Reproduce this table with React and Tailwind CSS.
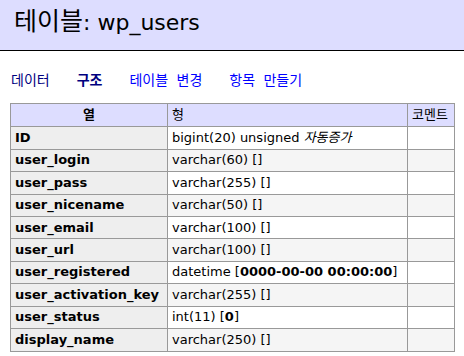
import React from "react";

const FONT = { fontFamily: '"DejaVu Sans", Verdana, "Noto Sans CJK KR", sans-serif' };

const COLUMNS = [
  { name: "ID", type: "bigint(20) unsigned", extra: "자동증가" },
  { name: "user_login", type: "varchar(60)", def: "" },
  { name: "user_pass", type: "varchar(255)", def: "" },
  { name: "user_nicename", type: "varchar(50)", def: "" },
  { name: "user_email", type: "varchar(100)", def: "" },
  { name: "user_url", type: "varchar(100)", def: "" },
  { name: "user_registered", type: "datetime", def: "0000-00-00 00:00:00" },
  { name: "user_activation_key", type: "varchar(255)", def: "" },
  { name: "user_status", type: "int(11)", def: "0" },
  { name: "display_name", type: "varchar(250)", def: "" },
];

export default function App() {
  return (
    <div className="w-[464px] h-[356px] bg-white text-black text-[13px] leading-[1.25] overflow-hidden" style={FONT}>
      {/* page heading */}
      <h2 className="h-[51px] bg-[#ddddff] border-b border-black pl-[14px] pt-[8px] text-[22px] leading-[27px] font-normal">
        <span className="text-[25px]">테이블</span>: wp_users
      </h2>

      {/* tabs */}
      <p className="flex gap-[27px] pl-[11px] mt-[21px] leading-[16px] text-[14px] [word-spacing:4px]">
        <a href="#" className="text-[#000080]">데이터</a>
        <a href="#" className="text-[#000080] font-bold">구조</a>
        <a href="#" className="text-[#0000ff]">테이블 변경</a>
        <a href="#" className="text-[#0000ff]">항목 만들기</a>
      </p>

      {/* structure table */}
      <table className="ml-[10px] mt-[15px] border-collapse table-fixed w-[444px]">
        <colgroup>
          <col className="w-[157px]" />
          <col className="w-[240px]" />
          <col className="w-[47px]" />
        </colgroup>
        <thead className="bg-[#ddddff]">
          <tr>
            <th className="border border-[#999999] px-[4px] py-[3px] text-center font-bold">열</th>
            <td className="border border-[#999999] px-[4px] py-[3px]">형</td>
            <td className="border border-[#999999] px-[4px] py-[3px]">코멘트</td>
          </tr>
        </thead>
        <tbody>
          {COLUMNS.map((col, i) => (
            <tr key={col.name} className={i % 2 === 1 ? "bg-[#f5f5f5]" : "bg-white"}>
              <th className="border border-[#999999] bg-[#eeeeee] px-[4px] py-[2.6px] text-left font-bold whitespace-nowrap">
                {col.name}
              </th>
              <td className="border border-[#999999] px-[4px] py-[2.6px] whitespace-nowrap">
                {col.type}
                {col.extra ? (
                  <>
                    {" "}
                    <i>{col.extra}</i>
                  </>
                ) : (
                  <>
                    {" "}[<b>{col.def}</b>]
                  </>
                )}
              </td>
              <td className="border border-[#999999] px-[4px] py-[2.6px]"></td>
            </tr>
          ))}
        </tbody>
      </table>
    </div>
  );
}
